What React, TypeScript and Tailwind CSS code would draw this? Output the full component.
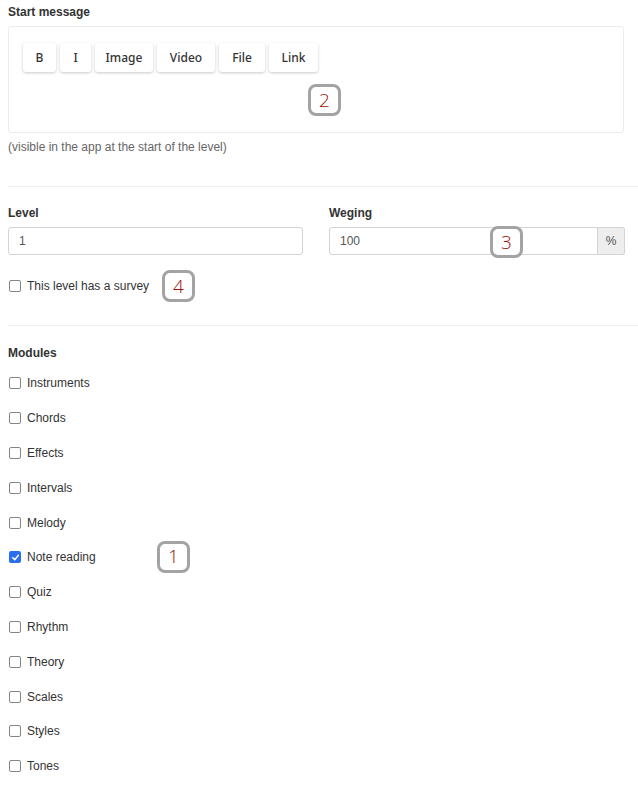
import React from 'react';

const modules = [
  { name: 'Instruments', checked: false },
  { name: 'Chords', checked: false },
  { name: 'Effects', checked: false },
  { name: 'Intervals', checked: false },
  { name: 'Melody', checked: false },
  { name: 'Note reading', checked: true },
  { name: 'Quiz', checked: false },
  { name: 'Rhythm', checked: false },
  { name: 'Theory', checked: false },
  { name: 'Scales', checked: false },
  { name: 'Styles', checked: false },
  { name: 'Tones', checked: false },
];

const toolbar = [
  { label: 'B', w: 'w-[33px]' },
  { label: 'I', w: 'w-[31px]' },
  { label: 'Image', w: 'w-[58px]' },
  { label: 'Video', w: 'w-[58px]' },
  { label: 'File', w: 'w-[46px]' },
  { label: 'Link', w: 'w-[49px]' },
];

function Badge({ n, className }: { n: number; className: string }) {
  return (
    <div
      className={`absolute w-[33px] h-[32px] rounded-[8px] border-[3px] border-[#a3a3a3] bg-white flex items-center justify-center text-[19px] text-[#9c1409] leading-none ${className}`}
      style={{ fontFamily: '"Open Sans", sans-serif', fontWeight: 300 }}
    >
      {n}
    </div>
  );
}

function Checkbox({ checked }: { checked: boolean }) {
  if (checked) {
    return (
      <span className="w-[12px] h-[12px] rounded-[2px] bg-[#2a6ff0] flex items-center justify-center shrink-0">
        <svg width="9" height="9" viewBox="0 0 10 10">
          <path d="M2 5.2 L4.2 7.4 L8.2 2.6" fill="none" stroke="white" strokeWidth="1.7" strokeLinecap="round" strokeLinejoin="round" />
        </svg>
      </span>
    );
  }
  return <span className="w-[12px] h-[12px] rounded-[2px] border border-[#858585] bg-white shrink-0" />;
}

export default function App() {
  return (
    <div
      className="relative w-[638px] min-h-[785px] bg-white pl-2 pt-1 text-[12px] text-[#333] overflow-hidden"
      style={{ fontFamily: '"Liberation Sans", Arial, sans-serif' }}
    >
      <div className="font-bold leading-4">Start message</div>

      <div className="relative mt-[6px] w-[616px] h-[107px] border border-[#ececec] rounded-[3px] pt-4 pl-[14px]">
        <div className="flex gap-1">
          {toolbar.map((b) => (
            <div
              key={b.label}
              className={`${b.w} h-[29px] bg-white rounded-[3px] shadow-[0_1px_3px_rgba(0,0,0,0.22)] flex items-center justify-center text-[12px] font-medium text-[#333]`}
              style={{ fontFamily: '"Noto Sans", sans-serif' }}
            >
              {b.label}
            </div>
          ))}
        </div>
        <Badge n={2} className="left-[299px] top-[57px]" />
      </div>

      <div className="mt-[6px] leading-4 text-[12px] text-[#666]">(visible in the app at the start of the level)</div>

      <div className="mt-[31px] border-t border-[#eeeeee]" />

      <div className="mt-[18px] grid grid-cols-[295px_296px] gap-x-[26px]">
        <div>
          <div className="font-bold leading-4">Level</div>
          <div className="mt-[6px] h-[28px] border border-[#d4d4d4] rounded-[3px] flex items-center px-[10px] text-[#555]">1</div>
        </div>
        <div>
          <div className="font-bold leading-4">Weging</div>
          <div className="relative mt-[6px] h-[28px] flex">
            <div className="flex-1 border border-[#d4d4d4] rounded-l-[3px] flex items-center px-[10px] text-[#555]">100</div>
            <div className="w-[27px] border border-l-0 border-[#d4d4d4] rounded-r-[3px] bg-[#eeeeee] flex items-center justify-center text-[#555]">%</div>
            <Badge n={3} className="left-[161px] top-[-1px]" />
          </div>
        </div>
      </div>

      <div className="relative mt-[23px] h-4 flex items-center gap-[6px] pl-px">
        <Checkbox checked={false} />
        <span>This level has a survey</span>
        <Badge n={4} className="left-[154px] top-[-8px]" />
      </div>

      <div className="mt-[31px] border-t border-[#eeeeee]" />

      <div className="mt-[19px] font-bold leading-4">Modules</div>

      <div className="mt-[5px]">
        {modules.map((m) => (
          <div key={m.name} className="relative h-[34.8px] flex items-center gap-[6px] pl-px">
            <Checkbox checked={m.checked} />
            <span>{m.name}</span>
            {m.name === 'Note reading' && <Badge n={1} className="left-[149px] top-[1px]" />}
          </div>
        ))}
      </div>
    </div>
  );
}
